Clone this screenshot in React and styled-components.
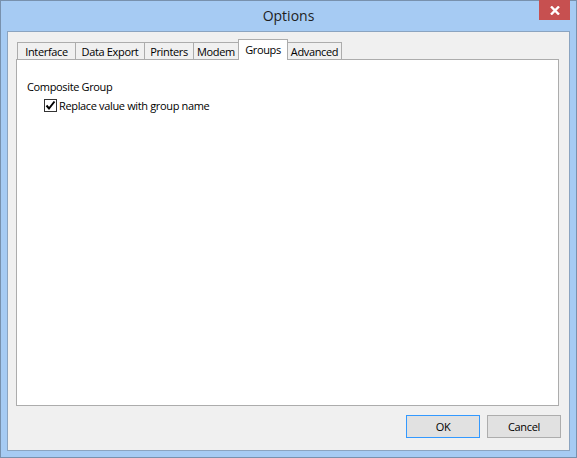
import React from 'react'
import styled, { createGlobalStyle } from 'styled-components'

const GlobalStyle = createGlobalStyle`
  html, body {
    margin: 0;
    padding: 0;
    background: #a6cbf3;
  }
  body {
    font-family: "Open Sans", "Liberation Sans", sans-serif;
    font-size: 11px;
    letter-spacing: -0.35px;
    color: #000;
  }
`;

const Window = styled.div`
  width: 577px;
  height: 458px;
  box-sizing: border-box;
  border: 1px solid #7891ad;
  background-color: #a6cbf3;
  display: flex;
  flex-direction: column;
`;

const TitleBar = styled.div`
  height: 30px;
  display: grid;
  grid-template-columns: 1fr auto 1fr;
  align-items: center;
`;

const Title = styled.div`
  grid-column: 2;
  font-size: 14px;
  letter-spacing: 0;
  color: #1e1e1e;
  padding-bottom: 1px;
`;

const CloseButton = styled.div`
  grid-column: 3;
  justify-self: end;
  align-self: start;
  width: 31px;
  height: 20px;
  margin-top: -1px;
  margin-right: 6px;
  background-color: #c75050;
  display: flex;
  align-items: center;
  justify-content: center;
`;

const Client = styled.div`
  flex: 1;
  margin: 0 6px 6px;
  border: 1px solid #8ba4c0;
  background-color: #f0f0f0;
  padding: 7px 8px 12px 8px;
  display: flex;
  flex-direction: column;
`;

const TabRow = styled.div`
  display: flex;
  align-items: flex-end;
  padding-left: 2px;
  height: 20px;
`;

const Tab = styled.div`
  position: relative;
  box-sizing: border-box;
  width: ${p => p.w}px;
  height: ${p => (p.active ? 21 : 17)}px;
  margin-left: -1px;
  margin-bottom: ${p => (p.active ? -1 : 0)}px;
  z-index: ${p => (p.active ? 2 : 1)};
  border: 1px solid #acacac;
  border-bottom: none;
  background-color: ${p => (p.active ? '#ffffff' : '#f0f0f0')};
  display: flex;
  justify-content: center;
  align-items: ${p => (p.active ? 'flex-start' : 'center')};
  padding-top: ${p => (p.active ? 2 : 0)}px;
  line-height: 15px;
  white-space: nowrap;
`;

const Panel = styled.div`
  height: 347px;
  margin-right: 2px;
  box-sizing: border-box;
  border: 1px solid #acacac;
  background-color: #ffffff;
  padding: 19px 10px;
`;

const GroupLabel = styled.div`
  line-height: 15px;
`;

const CheckRow = styled.label`
  display: flex;
  align-items: center;
  gap: 2px;
  margin-top: 4px;
  margin-left: 17px;
  line-height: 15px;
`;

const CheckBox = styled.span`
  width: 13px;
  height: 13px;
  box-sizing: border-box;
  border: 1px solid #333333;
  background-color: #ffffff;
  display: flex;
  align-items: center;
  justify-content: center;
`;

const ButtonRow = styled.div`
  display: flex;
  justify-content: flex-end;
  gap: 7px;
  margin-top: 9px;
`;

const Button = styled.button`
  width: 74px;
  height: 23px;
  box-sizing: border-box;
  border: 1px solid ${p => (p.primary ? '#3399ff' : '#adadad')};
  background-color: #e1e1e1;
  font-family: inherit;
  font-size: 11px;
  letter-spacing: inherit;
  color: #000;
  padding: 0;
`;

const tabs = [
  { label: 'Interface', w: 59 },
  { label: 'Data Export', w: 70 },
  { label: 'Printers', w: 50 },
  { label: 'Modem', w: 46 },
  { label: 'Groups', w: 50, active: true },
  { label: 'Advanced', w: 55 },
];

const App = () => {
  return (
    <>
      <GlobalStyle />
      <Window>
        <TitleBar>
          <Title>Options</Title>
          <CloseButton>
            <svg width="10" height="9" viewBox="0 0 10 9">
              <path d="M1 0.5 L9 8.5 M9 0.5 L1 8.5" stroke="#fff" strokeWidth="2.4" />
            </svg>
          </CloseButton>
        </TitleBar>
        <Client>
          <TabRow>
            {tabs.map(t => (
              <Tab key={t.label} w={t.w} active={t.active}>{t.label}</Tab>
            ))}
          </TabRow>
          <Panel>
            <GroupLabel>Composite Group</GroupLabel>
            <CheckRow>
              <CheckBox>
                <svg width="11" height="11" viewBox="0 0 11 11">
                  <path d="M1.5 5.5 L4 8.5 L9.5 1.5" stroke="#000" strokeWidth="2" fill="none" />
                </svg>
              </CheckBox>
              Replace value with group name
            </CheckRow>
          </Panel>
          <ButtonRow>
            <Button primary>OK</Button>
            <Button>Cancel</Button>
          </ButtonRow>
        </Client>
      </Window>
    </>
  )
}

export default App
